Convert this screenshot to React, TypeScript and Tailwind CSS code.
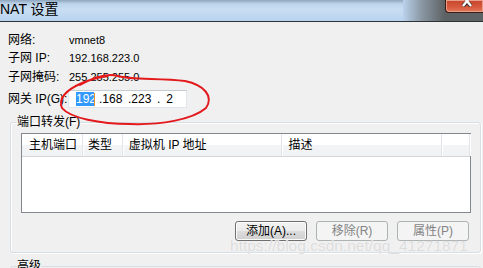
import React from "react";

const font = "font-['Liberation_Sans','Noto_Sans_CJK_SC',sans-serif]";

function Row({ label, value }: { label: React.ReactNode; value: string }) {
  return (
    <div className="flex items-center h-[18px]">
      <div className="w-[61px] text-[12px] leading-[18px]">{label}</div>
      <div className="text-[11px] leading-[18px]">{value}</div>
    </div>
  );
}

function Btn({ children, disabled }: { children: React.ReactNode; disabled?: boolean }) {
  return disabled ? (
    <button
      disabled
      className="w-[72px] h-[20px] rounded-[3px] border border-[#adb2b5] bg-[#f4f4f4] text-[12px] leading-[18px] text-[#838383]"
    >
      {children}
    </button>
  ) : (
    <button className="w-[72px] h-[20px] rounded-[3px] border border-[#707070] bg-[linear-gradient(180deg,#f2f2f2_0%,#ebebeb_50%,#dddddd_51%,#cfcfcf_100%)] text-[12px] leading-[18px] text-black shadow-[inset_0_0_0_1px_#fcfcfc]">
      {children}
    </button>
  );
}

export default function App() {
  const cols = [
    { w: "w-[61px]", label: "主机端口", pl: "pl-[7px]" },
    { w: "w-[40px]", label: "类型", pl: "pl-[5px]" },
    { w: "w-[160px]", label: "虚拟机 IP 地址", pl: "pl-[6px]" },
    { w: "w-[160px]", label: "描述", pl: "pl-[6px]" },
    { w: "w-[28px]", label: "", pl: "" },
  ];

  return (
    <div className={`relative w-[483px] h-[268px] overflow-hidden bg-[#f0f0f0] text-black ${font}`}>
      {/* Title bar */}
      <div className="flex h-[22px] border-b border-[#2e3336] shadow-[inset_0_-1px_0_#e8eef4]">
        <div className="flex-1 flex items-start bg-[linear-gradient(180deg,#8da5bd_0%,#bcd3ea_18%,#c9def3_45%,#b8d3ef_100%)]">
          <span className="text-[14px] leading-[18px] text-black">NAT 设置</span>
        </div>
        <div className="w-[42px] bg-[linear-gradient(90deg,#b9d2ec_0%,#8a97a3_45%,#5d6264_100%)]" />
        <div className="w-[38px] bg-[#5d6264] flex items-start">
          <div className="relative w-[38px] h-[13px] rounded-bl-[4px] border-l border-b border-[#3b1a14] bg-[linear-gradient(180deg,#c8452b_0%,#d65a3e_60%,#e27b5c_100%)] shadow-[inset_0_0_0_1px_#e8a08c] overflow-hidden">
            <svg viewBox="0 0 12 12" className="absolute left-[15px] -top-[5px] w-[12px] h-[12px]">
              <path d="M2 1 L6 5 L10 1 M2 11 L6 7 L10 11 M6 5 L6 7" stroke="#3a2a26" strokeWidth="4" fill="none" />
              <path d="M2 1 L10 11 M10 1 L2 11" stroke="#fff" strokeWidth="2.4" fill="none" />
            </svg>
          </div>
        </div>
      </div>

      {/* Fields */}
      <div className="px-[8px] pt-[9px]">
        <Row label="网络:" value="vmnet8" />
        <Row label="子网 IP:" value="192.168.223.0" />
        <div className="mt-[1px]">
          <Row label="子网掩码:" value="255.255.255.0" />
        </div>
        <div className="flex items-center h-[18px] mt-[4px]">
          <div className="w-[60px] text-[12px] leading-[18px]">网关 IP(G):</div>
          <div className="w-[119px] h-[18px] bg-white border border-[#e0e6ec] border-t-[#c5cbd2] flex items-center pl-[7px] text-[12px] leading-[14px]">
            <span className="w-[18px] bg-[#3399ff] text-white">192</span>
            <span className="w-[1px] h-[13px] bg-[#e8902c]" />
            <span className="ml-[4px] w-[30px]">.168</span>
            <span className="w-[30px]">.223</span>
            <span className="w-[30px]">
              .<span className="ml-[6px]">2</span>
            </span>
          </div>
        </div>
      </div>

      {/* Port forwarding group */}
      <fieldset className="ml-[10px] mr-[2px] mt-[5px] border border-[#d5dfe5] rounded-[3px] pl-[6px] pb-[11px] pt-[2px] shadow-[inset_1px_1px_0_#fff,1px_1px_0_#fff]">
        <legend className="px-0 text-[12px] leading-[18px]">端口转发(F)</legend>
        <div className="ml-[4px] w-[450px]">
          <div className="h-[80px] border border-[#828790] bg-white">
            <div className="flex h-[23px] border-b border-[#d5d5d5] bg-[linear-gradient(180deg,#ffffff_0%,#ffffff_50%,#f3f4f6_51%,#f1f2f4_100%)]">
              {cols.map((c, i) => (
                <div
                  key={i}
                  className={`${c.w} ${c.pl} h-full flex items-center text-[12px] border-r border-[#e1e4e8] shadow-[1px_0_0_#fff] whitespace-nowrap`}
                >
                  {c.label}
                </div>
              ))}
            </div>
          </div>
          <div className="mt-[8px] flex justify-end gap-[9px] pr-[2px]">
            <Btn>添加(A)...</Btn>
            <Btn disabled>移除(R)</Btn>
            <Btn disabled>属性(P)</Btn>
          </div>
        </div>
      </fieldset>

      {/* Advanced group (cut off) */}
      <fieldset className="ml-[10px] mr-[2px] mt-[4px] h-[40px] border border-[#d5dfe5] rounded-[3px] pl-[6px]">
        <legend className="px-0 text-[12px] leading-[18px]">高级</legend>
      </fieldset>

      {/* Watermark */}
      <div className="absolute left-[230px] top-[237px] text-[15.5px] leading-[18px] text-[#dcdcdc] [text-shadow:0_0_1px_#fff] whitespace-nowrap pointer-events-none">
        https://blog.csdn.net/qq_41271871
      </div>

      {/* Red hand-drawn annotation */}
      <svg className="absolute inset-0 w-[483px] h-[268px] pointer-events-none" viewBox="0 0 483 268">
        <path
          d="M80 85 C94 77 108 73 118 76 C130 80 160 78 185 81 C204 85 214 96 206 108 C192 120 160 125 130 124 C100 124 70 118 62 108 C58 98 66 90 82 83 C92 79 100 77 108 76"
          stroke="#e3191c"
          strokeWidth="2"
          fill="none"
          strokeLinecap="round"
        />
      </svg>
    </div>
  );
}
